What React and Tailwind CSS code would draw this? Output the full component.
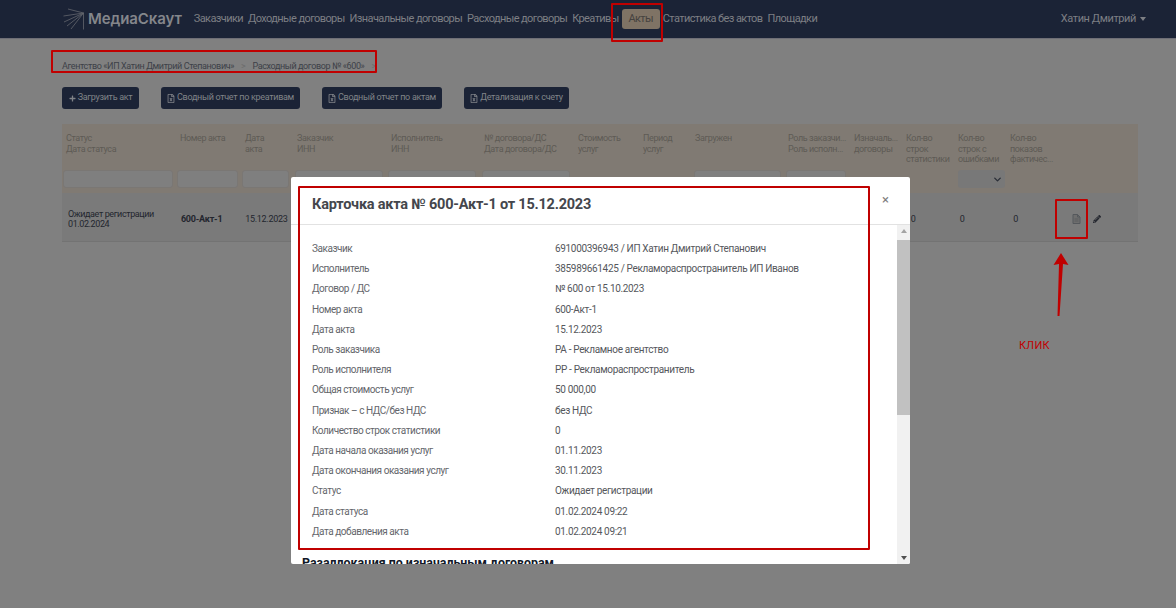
import React from "react";
import { FaPlus, FaRegFileExcel, FaPencilAlt } from "react-icons/fa";
import { ChevronDown } from "lucide-react";

const navItems = ["Заказчики", "Доходные договоры", "Изначальные договоры", "Расходные договоры", "Креативы", "Акты", "Статистика без актов", "Площадки"];

const buttons = [
  { label: "Сводный отчет по креативам", width: "w-[139px]" },
  { label: "Сводный отчет по актам", width: "w-[120px]" },
  { label: "Детализация к счету", width: "w-[105px]" },
];

// ширина колонки, заголовок и фильтр
const columns = [
  { w: "w-[114px]", pl: "pl-[4px]", lines: ["Статус", "Дата статуса"], filter: "w-[110px] -ml-[3px]" },
  { w: "w-[65px]", pl: "pl-[4px]", lines: ["Номер акта"], filter: "w-[61px] -ml-[3px]" },
  { w: "w-[54px]", pl: "pl-[4px]", lines: ["Дата", "акта"], filter: "w-[47px] -ml-[3px]" },
  { w: "w-[93px]", pl: "pl-[2px]", lines: ["Заказчик", "ИНН"], filter: "w-[88px] -ml-[2px]" },
  { w: "w-[93px]", pl: "pl-[3px]", lines: ["Исполнитель", "ИНН"], filter: "w-[88px] -ml-[3px]" },
  { w: "w-[94px]", pl: "pl-[3px]", lines: ["№ договора/ДС", "Дата договора/ДС"], filter: "w-[88px] -ml-[2px]" },
  { w: "w-[65px]", pl: "pl-[3px]", lines: ["Стоимость", "услуг"] },
  { w: "w-[52px]", pl: "pl-[3px]", lines: ["Период", "услуг"] },
  { w: "w-[93px]", pl: "pl-[3px]", lines: ["Загружен"], filter: "w-[87px] -ml-[1px]" },
  { w: "w-[66px]", pl: "pl-[3px]", lines: ["Роль заказчи...", "Роль исполн..."], filter: "w-[60px] -ml-[2px]" },
  { w: "w-[52px]", pl: "pl-[3px]", lines: ["Изначаль...", "договоры"] },
  { w: "w-[52px]", pl: "pl-[3px]", lines: ["Кол-во", "строк", "статистики"] },
  { w: "w-[52px]", pl: "pl-[3px]", lines: ["Кол-во", "строк с", "ошибками"], select: true },
  { w: "w-[52px]", pl: "pl-[3px]", lines: ["Кол-во", "показов", "фактичес..."] },
  { w: "w-[79px]", pl: "pl-[3px]", lines: [] },
];

const details = [
  ["Заказчик", "691000396943 / ИП Хатин Дмитрий Степанович"],
  ["Исполнитель", "385989661425 / Рекламораспространитель ИП Иванов"],
  ["Договор / ДС", "№ 600 от 15.10.2023"],
  ["Номер акта", "600-Акт-1"],
  ["Дата акта", "15.12.2023"],
  ["Роль заказчика", "РА - Рекламное агентство"],
  ["Роль исполнителя", "РР - Рекламораспространитель"],
  ["Общая стоимость услуг", "50 000,00"],
  ["Признак – с НДС/без НДС", "без НДС"],
  ["Количество строк статистики", "0"],
  ["Дата начала оказания услуг", "01.11.2023"],
  ["Дата окончания оказания услуг", "30.11.2023"],
  ["Статус", "Ожидает регистрации"],
  ["Дата статуса", "01.02.2024 09:22"],
  ["Дата добавления акта", "01.02.2024 09:21"],
];

function Logo() {
  return (
    <svg width="22" height="22" viewBox="0 0 22 22" fill="none" stroke="#63666d" strokeWidth="0.8">
      <path d="M20.5 5 L20.5 21.5" />
      <path d="M20.5 5 L5 1" />
      <path d="M20.5 5 L0.5 8" />
      <path d="M20.5 5 L1 14" />
      <path d="M20.5 5 L4 18" />
      <path d="M20.5 5 L8 21" />
    </svg>
  );
}

function DocIcon() {
  return (
    <svg width="9" height="10" viewBox="0 0 9 10" fill="none" stroke="#55585c" strokeWidth="1">
      <path d="M1 0.5 H5.5 L8 3 V9.5 H1 Z" fill="#6e6e6e" />
      <path d="M5.5 0.5 V3 H8" />
      <path d="M2.5 5 H6.5 M2.5 7 H6.5" strokeWidth="0.8" />
    </svg>
  );
}

function Header() {
  return (
    <header className="h-[39px] bg-[#1b2336] border-b border-[#6e6e76] flex items-center pl-[63px] pr-[30px]">
      <Logo />
      <span className="ml-[3px] text-[15px] font-semibold text-[#84868b] tracking-[-0.1px] font-['Inter','Liberation_Sans',sans-serif]">МедиаСкаут</span>
      <nav className="ml-[12px] flex items-center gap-[5px] text-[11px] tracking-[-0.6px]">
        {navItems.map((item) =>
          item === "Акты" ? (
            <span key={item} className="h-[20px] w-[38px] flex items-center justify-center rounded-[3px] bg-[#7f7365] text-[#45423f] -mx-[2px]">
              {item}
            </span>
          ) : (
            <span key={item} className="text-[#7d7f84] whitespace-nowrap">{item}</span>
          )
        )}
      </nav>
      <div className="ml-auto flex items-center gap-[4px] text-[11px] tracking-[-0.4px] text-[#7d7f84]">
        Хатин Дмитрий
        <span className="border-x-[3px] border-x-transparent border-t-[4px] border-t-[#7d7f84]" />
      </div>
    </header>
  );
}

function Toolbar() {
  return (
    <div className="mt-[15px] ml-[62px] flex items-center gap-[22px] text-[9px] tracking-[-0.3px]">
      <button className="h-[22px] w-[77px] rounded-[3px] bg-[#1b2336] text-[#808388] flex items-center justify-center gap-[2px]">
        <FaPlus className="w-[7px] h-[7px]" />
        Загрузить акт
      </button>
      {buttons.map((b) => (
        <button key={b.label} className={`${b.width} h-[22px] rounded-[3px] bg-[#1b2336] text-[#808388] flex items-center justify-center gap-[2px] whitespace-nowrap`}>
          <FaRegFileExcel className="w-[8px] h-[9px]" />
          {b.label}
        </button>
      ))}
    </div>
  );
}

function ActsTable() {
  return (
    <div className="mt-[15px] ml-[62px] w-[1076px] text-[9px] leading-[10.5px] tracking-[-0.4px]">
      <div className="flex h-[69px] bg-[#807a73] text-[#5e5a55]">
        {columns.map((c, i) => (
          <div key={i} className={`${c.w} ${c.pl} shrink-0 flex flex-col justify-between pt-[9px] pb-[5px]`}>
            <div className="whitespace-nowrap">
              {c.lines.map((l) => <div key={l}>{l}</div>)}
            </div>
            {c.filter && <div className={`${c.filter} h-[18px] rounded-[3px] bg-[#7f7f7f] border border-[#7a7774]`} />}
            {c.select && (
              <div className="w-[47px] h-[18px] rounded-[3px] bg-[#787878] flex items-center justify-end pr-[2px] text-[#2b2f38]">
                <ChevronDown className="w-[11px] h-[11px]" strokeWidth={3} />
              </div>
            )}
          </div>
        ))}
      </div>
      <div className="flex h-[49px] items-center pt-[4px] bg-[#7a7a7a] border-b border-[#737373] text-[#23262e]">
        <div className="w-[114px] pl-[6px]">
          <div>Ожидает регистрации</div>
          <div>01.02.2024</div>
        </div>
        <div className="w-[65px] pl-[6px] font-bold tracking-[-0.2px]">600-Акт-1</div>
        <div className="w-[54px] pl-[6px] tracking-[-0.3px]">15.12.2023</div>
        <div className="w-[671px] flex justify-end">
          <span className="w-[52px] pl-[6px]">0</span>
        </div>
        <div className="w-[52px] pl-[3px]">0</div>
        <div className="w-[52px] pl-[5px]">0</div>
        <div className="w-[79px] pl-[12px] flex items-center gap-[12px]">
          <DocIcon />
          <FaPencilAlt className="w-[8px] h-[8px] text-[#23262e]" />
        </div>
      </div>
    </div>
  );
}

function ActModal() {
  return (
    <div className="absolute left-[291px] top-[177px] w-[619px] h-[387px] bg-white rounded-[2px] flex flex-col overflow-hidden text-[#4b4d52]">
      <div className="h-[48px] shrink-0 border-b border-[#e2e2e2] flex items-center justify-between pl-[21px] pr-[21px]">
        <h2 className="mt-[8px] text-[14.5px] font-bold text-[#44464c] tracking-[-0.23px]">Карточка акта № 600-Акт-1 от 15.12.2023</h2>
        <span className="text-[13px] leading-none text-[#7d7d7d] -mt-[3px]">×</span>
      </div>
      <div className="flex flex-1 min-h-0">
        <div className="flex-1 overflow-hidden pt-[13.5px] pl-[21px] text-[10px]">
          {details.map(([label, value]) => (
            <div key={label} className="flex h-[20.2px] items-center">
              <div className="w-[243px] text-[#64666b] tracking-[-0.45px]">{label}</div>
              <div className="text-[#55575c] tracking-[-0.33px]">{value}</div>
            </div>
          ))}
          <h3 className="mt-[13px] -ml-[10px] text-[12.4px] font-bold text-[#111827] whitespace-nowrap">Разаллокация по изначальным договорам</h3>
        </div>
        <div className="w-[13px] shrink-0 bg-[#f1f1f1] flex flex-col items-center justify-between py-[4px] relative">
          <span className="border-x-[3px] border-x-transparent border-b-[4px] border-b-[#a3a3a3]" />
          <div className="absolute top-[15px] left-0 w-full h-[175px] bg-[#c1c1c1]" />
          <span className="border-x-[3px] border-x-transparent border-t-[4px] border-t-[#505050]" />
        </div>
      </div>
    </div>
  );
}

function Annotations() {
  return (
    <>
      <div className="absolute left-[51px] top-[50px] w-[326px] h-[23px] border-2 border-[#c00000] rounded-[1px]" />
      <div className="absolute left-[611px] top-[3px] w-[52px] h-[39px] border-2 border-[#c00000] rounded-[1px]" />
      <div className="absolute left-[298px] top-[186px] w-[572px] h-[364px] border-2 border-[#c00000] rounded-[1px]" />
      <div className="absolute left-[1055px] top-[199px] w-[33px] h-[40px] border-2 border-[#c00000] rounded-[1px]" />
      <svg className="absolute left-[1050px] top-[250px]" width="22" height="70" viewBox="0 0 22 70" fill="#c00000">
        <path d="M11 3 L18.5 15 L13 14 L9.5 66 L7.5 66 L9 14 L3.5 15 Z" />
      </svg>
      <span className="absolute left-[1019px] top-[339px] text-[11px] leading-[13px] text-[#c00000] tracking-[0.3px]">КЛИК</span>
    </>
  );
}

export default function App() {
  return (
    <div className="relative h-[608px] w-[1176px] overflow-hidden bg-[#808080] font-['Roboto','Liberation_Sans',sans-serif]">
      <Header />
      <div className="mt-[22px] ml-[62px] text-[9px] leading-[11px] tracking-[-0.38px] text-[#3d4048] flex gap-[7px] whitespace-nowrap">
        <span>Агентство «ИП Хатин Дмитрий Степанович»</span>
        <span className="text-[#6c6c6c]">&gt;</span>
        <span>Расходный договор № «600»</span>
        <span className="text-[#6c6c6c]">&gt;</span>
      </div>
      <Toolbar />
      <ActsTable />
      <ActModal />
      <Annotations />
    </div>
  );
}
